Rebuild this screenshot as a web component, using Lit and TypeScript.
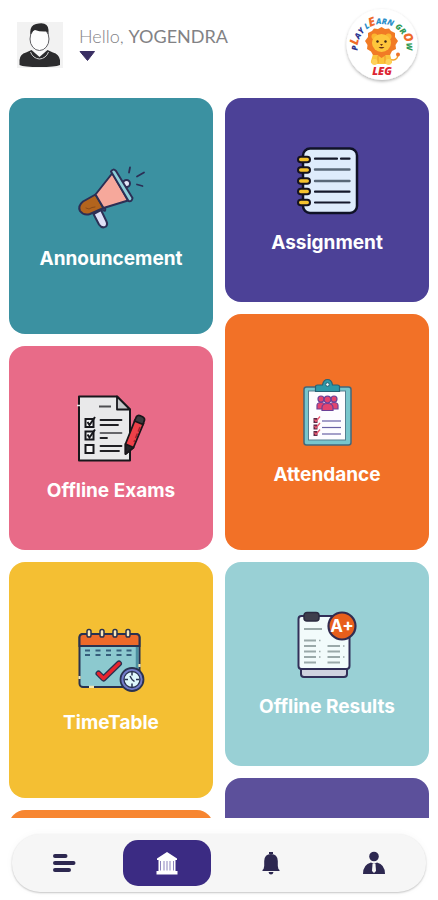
import { LitElement, html, svg, css, nothing } from "lit";
import { customElement, property } from "lit/decorators.js";
import { classMap } from "lit/directives/class-map.js";

type Card = { label?: string; tone: string; tall: boolean; icon?: unknown };

const announcement = svg`
  <g stroke="#2c2f55" stroke-width="2" stroke-linejoin="round" stroke-linecap="round">
    <path d="M18.500 53 L24 63.500 Q27 68 31 65.500 Q33 63.500 31.500 60.500 L26 49Z" fill="#dfe0f6"/>
    <path d="M28 49 Q31 51.500 30 46.500" fill="none"/>
    <path d="M20.500 33.500 L8 40.500 Q2.500 45 5 50 Q9 55 15 53 L28.500 47Z" fill="#b3641d"/>
    <path d="M11 47 L14 48 L17 46.500 L20 46" fill="none" stroke="#8a4a18" stroke-width="1"/>
    <path d="M20.500 33.500 L37.500 12 L53 39.500 L28.500 47Z" fill="#f6a89b"/>
    <circle cx="51.500" cy="22.500" r="3.500" fill="#e4e6f7"/>
    <path d="M36 10.500 Q38 7 41 10 L57.500 37 Q57 41 53.500 40Z" fill="#8ed0da"/>
    <path d="M55 6.500 L54 11.500 M62 15.500 L69 11.500 M62 23.500 L67.500 25" fill="none" stroke-width="1.800"/>
  </g>`;

const assignment = svg`
  <rect x="12" y="3.500" width="54" height="64.500" rx="7" fill="#deecfc" stroke="#0f1226" stroke-width="2.500"/>
  <path d="M24 13.700H46 M50 13.700H58.500 M24 46.700H58.500 M24 57.500H58.500" stroke="#14182b" stroke-width="2.200" stroke-linecap="round"/>
  <path d="M24 24.500H58.500 M24 36H58.500" stroke="#596878" stroke-width="2.400" stroke-linecap="round"/>
  ${[14.5, 25, 36, 46.5, 57.5].map(
    (y) => svg`<rect x="7" y=${y - 2.8} width="12" height="5.600" rx="2.800" fill="#f5c32f" stroke="#15131f" stroke-width="2"/>`
  )}`;

const exams = svg`
  <path d="M4 3.500H42L55 16.500V67.500H4Z" fill="#e9e9ea" stroke="#17171b" stroke-width="2" stroke-linejoin="round"/>
  <path d="M42 3.500L55 16.500H42Z" fill="#c5c7c9" stroke="#17171b" stroke-width="1.800" stroke-linejoin="round"/>
  <path d="M2 12.500H6" stroke="#e9e9ea" stroke-width="1.500"/>
  <path d="M24 13.500H36" stroke="#4e4e52" stroke-width="2"/>
  <path d="M25.500 27H46.500 M25.500 32H43 M25.500 53H46.500 M25.500 58H44 M25.500 45H32" stroke="#202024" stroke-width="1.800" stroke-linecap="round"/>
  <path d="M25.500 40H46.500" stroke="#66666a" stroke-width="1.800" stroke-linecap="round"/>
  ${[29.5, 42, 55.5].map(
    (y) => svg`<rect x="10.500" y=${y - 3.5} width="8" height="8" fill="#f6f6f6" stroke="#17171b" stroke-width="2"/>`
  )}
  <path d="M12.500 29L14.500 32L20 24 M12.500 41.500L14.500 44.500L20 36.500" fill="none" stroke="#17171b" stroke-width="2"/>
  <g stroke="#18161a" stroke-width="1.800" stroke-linejoin="round">
    <path d="M60 27L68.500 30.500L58.500 54.500L50.500 61V51Z" fill="#ee4048"/>
    <path d="M61.500 23.500Q63 21.500 66 23Q70 24.500 69.500 27L68 31.500L59.500 28Z" fill="#3b393d"/>
    <path d="M50.500 51L58.500 54.500L50.500 61Z" fill="#252428"/>
  </g>
  <path d="M65 34L59 49" stroke="#a31f2b" stroke-width="1.500" stroke-dasharray="5 2"/>`;

const attendance = svg`
  <rect x="13" y="10" width="47" height="58" rx="2.500" fill="#78c6cc" stroke="#42687c" stroke-width="1.500"/>
  <rect x="17.500" y="14" width="37" height="49" fill="#fdfcff" stroke="#557f90"/>
  <path d="M24.500 14.500V9.500Q24.500 8 26.500 8H31.500Q32.500 2.500 36.500 2.500Q40.500 2.500 41.500 8H46.500Q48.500 8 48.500 9.500V14.500Z" fill="#2f98a7" stroke="#286174" stroke-width="1.200"/>
  <circle cx="36.500" cy="7.500" r="1.800" fill="#f3f7f8" stroke="#286174"/>
  <g fill="#e3446f" stroke="#6c3f96" stroke-width="1.200">
    <circle cx="30" cy="22" r="3"/><circle cx="43" cy="22" r="3"/>
    <path d="M26 32V28.500Q26 25.500 30 25.500T34 28.500V32Z M39 32V28.500Q39 25.500 43 25.500T47 28.500V32Z"/>
    <circle cx="36.500" cy="22.500" r="3.300"/>
    <path d="M31 33.500V30.500Q31 26.500 36.500 26.500T42 30.500V33.500Z"/>
  </g>
  ${[43.5, 50, 56.5].map(
    (y) => svg`
      <rect x="22.500" y=${y - 2.5} width="4" height="5" fill="#5c2745"/>
      <path d=${`M23.500 ${y - 1}L25 ${y + 1}L29 ${y - 4}`} fill="none" stroke="#eb5a72" stroke-width="1.300"/>
      <path d=${`M31 ${y + 0.5}H50`} stroke="#6a62a5" stroke-width="1.200"/>`
  )}`;

const timetable = svg`
  <rect x="4.500" y="9" width="60" height="53" rx="3.500" fill="#8cc9cf" stroke="#293250" stroke-width="2"/>
  <path d="M62 21V60" stroke="#4c8fa0" stroke-width="2.500"/>
  <path d="M4.500 21V12.500Q4.500 9 8 9H61Q64.500 9 64.500 12.500V21Z" fill="#ed6a2a" stroke="#293250" stroke-width="2"/>
  <path d="M14 61.900H19 M4.500 51V54 M64.500 39V42" stroke="#f2e7b2" stroke-width="2.200"/>
  ${[14, 27, 40, 53].map(
    (x) => svg`<rect x=${x - 2} y="4.500" width="4" height="7.500" rx="1.800" fill="#fae8bc" stroke="#293250" stroke-width="1.500"/>`
  )}
  ${[12.5, 23, 33.5, 44, 54].map(
    (x) => svg`<path d=${`M${x - 2.5} 25.500H${x + 2.5} M${x - 2.5} 30H${x + 2.5}`} stroke="#365e7c" stroke-width="2.200"/>`
  )}
  <path d="M23.500 48.500L28.500 53.500L44 38.500" fill="none" stroke="#293250" stroke-width="6" stroke-linecap="round" stroke-linejoin="round"/>
  <path d="M23.500 48.500L28.500 53.500L44 38.500" fill="none" stroke="#e8242e" stroke-width="3.500" stroke-linecap="round" stroke-linejoin="round"/>
  <circle cx="57" cy="54.500" r="11.500" fill="#727bca" stroke="#293250" stroke-width="1.800"/>
  <circle cx="57" cy="54.500" r="8" fill="#dff7fb" stroke="#293250" stroke-width="1.300"/>
  <path d="M57 47V50.500 M57 58.500V62 M49.500 54.500H53 M61 54.500H64.500 M57 54.500L59.500 56.500 M57 54.500L55 51" stroke="#293250" stroke-width="1.500"/>`;

const results = svg`
  <rect x="10" y="52" width="46" height="16" rx="3" fill="#cfd2df" stroke="#312f58" stroke-width="2"/>
  <rect x="7.500" y="7" width="51" height="53" rx="3" fill="#f2fbfb" stroke="#312f58" stroke-width="2"/>
  <rect x="13" y="3.500" width="15" height="8.500" rx="3" fill="#3e3e4c" stroke="#2b2b40" stroke-width="1.500"/>
  <path d="M13 20H31 M13 31.500H25 M13 37H25 M13 42.500H25 M13 48H25 M13 53.500H25 M36.500 37H49 M36.500 42.500H49 M36.500 48H49 M36.500 53.500H49" stroke="#9aa9a9" stroke-width="1.800"/>
  <path d="M28 31.500H29.500 M28 42.500H29.500 M28 48H29.500 M52 37H53.500 M52 48H53.500" stroke="#9aa9a9" stroke-width="1.500"/>
  <circle cx="51" cy="17" r="13.500" fill="#e85f1c" stroke="#322c50" stroke-width="2.200"/>
  <text class="grade" x="51" y="23" text-anchor="middle">A+</text>`;

const columns: Card[][] = [
  [
    { label: "Announcement", tone: "teal", tall: true, icon: announcement },
    { label: "Offline Exams", tone: "pink", tall: false, icon: exams },
    { label: "TimeTable", tone: "yellow", tall: true, icon: timetable },
    { tone: "amber", tall: false },
  ],
  [
    { label: "Assignment", tone: "indigo", tall: false, icon: assignment },
    { label: "Attendance", tone: "orange", tall: true, icon: attendance },
    { label: "Offline Results", tone: "aqua", tall: false, icon: results },
    { tone: "violet", tall: true },
  ],
];

const tabs = [
  {
    name: "Menu",
    icon: svg`<path d="M3 5H13.500 M3 12H21.500 M3 19H17" stroke="currentColor" stroke-width="4" stroke-linecap="round"/>`,
  },
  {
    name: "Home",
    icon: svg`<path d="M12 1L22 7.500V9H2V7.500Z M3.500 9H20.500V20H3.500Z M1.500 20H22.500V23.500H1.500Z" fill="currentColor"/>
      <path d="M5.500 10V19.500 M9 10V19.500 M12 10V19.500 M15 10V19.500 M18.500 10V19.500" stroke="#8d84bd" stroke-width="1"/>`,
  },
  {
    name: "Notifications",
    icon: svg`<path d="M10 1H14V3H10Z M12 3Q18.500 3 18.800 10V15Q19 18 20.500 19V20H3.500V19Q5 18 5.200 15V10Q5.500 3 12 3Z M9.500 21H14.500Q14 23.500 12 23.500T9.500 21Z" fill="currentColor"/>`,
  },
  {
    name: "Profile",
    icon: svg`<circle cx="12" cy="5.500" r="4.800" fill="currentColor"/>
      <path d="M1 23Q1 13.500 9 11.500L12 13L15 11.500Q23 13.500 23 23Z" fill="currentColor"/>
      <path d="M10.500 13H13.500L14 20L12 22L10 20Z" fill="#f6f6f6"/>`,
  },
];

@customElement("school-card")
class SchoolCard extends LitElement {
  @property({ attribute: false }) card!: Card;

  static styles = css`
    :host { display: block; }
    .card {
      display: flex;
      flex-direction: column;
      align-items: center;
      justify-content: center;
      gap: 12px;
      box-sizing: border-box;
      width: 100%;
      height: 204px;
      padding: 2px 0 0;
      border: 0;
      border-radius: 16px;
      color: #fff;
      font: 700 19px/28px Inter, "Open Sans", sans-serif;
      white-space: nowrap;
      cursor: pointer;
    }
    .tall { height: 236px; }
    .icon { width: 72px; height: 72px; overflow: visible; }
    .grade { font: 700 17px Inter, sans-serif; fill: #fff; }
    .teal { background: #3b91a1; }
    .pink { background: #e86b88; }
    .yellow { background: #f4bf33; }
    .amber { background: #f78631; }
    .indigo { background: #4c4197; }
    .orange { background: #f27127; }
    .aqua { background: #99d0d5; }
    .violet { background: #5c509b; }
  `;

  render() {
    const { label, tone, tall, icon } = this.card;
    return html`<button type="button" class=${classMap({ card: true, tall, [tone]: true })}>
      ${icon ? html`<svg class="icon" viewBox="0 0 72 72" fill="none" aria-hidden="true">${icon}</svg>` : nothing}
      ${label ? html`<span>${label}</span>` : nothing}
    </button>`;
  }
}

@customElement("app-root")
class AppRoot extends LitElement {
  static styles = css`
    :host {
      display: flex;
      flex-direction: column;
      height: 100vh;
      background: #fff;
      font-family: Lato, "Open Sans", sans-serif;
    }
    .header {
      display: flex;
      align-items: flex-start;
      gap: 16px;
      box-sizing: border-box;
      height: 98px;
      flex: none;
      padding: 7px 18px 0 17px;
    }
    .avatar { width: 46px; height: 46px; margin-top: 15px; flex: none; }
    .account {
      display: flex;
      flex-direction: column;
      align-items: flex-start;
      gap: 2px;
      margin: 17px auto 0 0;
      padding: 0;
      border: 0;
      background: none;
      color: #828285;
      font: 400 18px/24px Lato, "Open Sans", sans-serif;
      cursor: pointer;
    }
    .hello { font-weight: 300; }
    .caret { width: 16px; height: 12px; }
    .logo { width: 76px; height: 78px; flex: none; }
    .arc, .brand { font-family: "Open Sans", sans-serif; font-weight: 800; font-style: italic; }
    .arc { font-size: 8px; }
    .big { font-size: 12px; }
    .brand { font-size: 11px; fill: #dd2632; }
    .navy { fill: #2b3490; }
    .red { fill: #ef6a2c; }
    .blue { fill: #2c8fc9; }
    .green { fill: #2f9a55; }
    .grid {
      display: grid;
      grid-template-columns: 1fr 1fr;
      gap: 12px;
      flex: 1;
      min-height: 0;
      padding: 0 9px;
      overflow-y: auto;
      scrollbar-width: none;
    }
    .column { display: flex; flex-direction: column; gap: 12px; }
    .nav {
      display: grid;
      grid-template-columns: repeat(4, 1fr);
      align-items: center;
      justify-items: center;
      flex: none;
      height: 58px;
      margin: 16px 12px 8px;
      border-radius: 28px;
      background: #f6f6f6;
      box-shadow: 0 1px 2px #00000038, 0 0 8px #00000008;
    }
    .tab {
      display: grid;
      place-items: center;
      width: 88px;
      height: 46px;
      padding: 0;
      border: 0;
      border-radius: 15px;
      background: none;
      color: #2d2850;
      cursor: pointer;
    }
    .active { background: #3b2b83; color: #fff; }
    .glyph { width: 24px; height: 24px; }
  `;

  render() {
    return html`
      <header class="header">
        <svg class="avatar" viewBox="0 0 46 46" aria-hidden="true">
          <rect width="46" height="46" fill="#f2f2f2"/>
          <path d="M17 25V30L22.500 34L28 30V25Z" fill="#fafafa"/>
          <path d="M2.500 43V38Q3 32 9 30.500L14.500 28L22.500 35L30.500 28L36 30.500Q42 32 43 38V43Q38 45 22.500 45T2.500 43Z" fill="#2c2c2e"/>
          <path d="M13.500 30Q16 36.500 22.500 37Q29 36.500 31.500 30" fill="none" stroke="#d0d0d0"/>
          <ellipse cx="22.500" cy="17" rx="9.500" ry="11.500" fill="#fdfdfd" stroke="#606064"/>
          <path d="M13.500 13Q12 4 19 2Q31 -1 31.500 8V13L30 9.500Q23 10 18 8Q15.500 8.500 14.500 11Z" fill="#2a2a2c"/>
        </svg>
        <button type="button" class="account">
          <span><span class="hello">Hello, </span>YOGENDRA</span>
          <svg class="caret" viewBox="0 0 16 12" aria-hidden="true">
            <path d="M1 1.500H15.500L8.500 10.500Z" fill="#3a2f63" stroke="#3a2f63" stroke-linejoin="round"/>
          </svg>
        </button>
        <svg class="logo" viewBox="0 0 76 78" role="img" aria-label="Play Learn Grow LEG">
          <defs>
            <filter id="shade" x="-20%" y="-20%" width="140%" height="140%">
              <feDropShadow dx="0" dy="1.500" stdDeviation="1.500" flood-color="#000" flood-opacity="0.300"/>
            </filter>
            <path id="ring" d="M15 50A24.500 24.500 0 1 1 61 50"/>
          </defs>
          <circle cx="38" cy="37.500" r="35.500" fill="#fff" filter="url(#shade)"/>
          <path d="M45 52Q53 55 54 48" fill="none" stroke="#f3a52e" stroke-width="1.500"/>
          <circle cx="54" cy="47.500" r="2" fill="#ee7429"/>
          <path d="M29 47H46L48 55Q48 57 44 57H31Q26 57 27 54Z" fill="#fbc43c"/>
          <path d="M37.500 20L41 22L45 21.500L47 24L51 26L51 30L54 34L51.500 38L52 42L48 44L46 48L42 48L37.500 51L33.500 48L29 48L27 44.500L23 42L23.500 38L21 34L24 30L24 26L28 24L30 21.500L34 22Z" fill="#f17b25"/>
          <circle cx="30.500" cy="29.500" r="3" fill="#fbb52f"/><circle cx="44.500" cy="29.500" r="3" fill="#fbb52f"/>
          <ellipse cx="37.500" cy="36" rx="9.500" ry="9" fill="#fdc63c"/>
          <circle cx="33.500" cy="34.500" r="1.200" fill="#3b2519"/><circle cx="41.500" cy="34.500" r="1.200" fill="#3b2519"/>
          <path d="M36 37H39L37.500 39Z M34.500 40Q37.500 43 40.500 40" fill="#6d3216"/>
          <path d="M34 49V56 M41 49V56" stroke="#ed962a"/>
          <circle cx="30.500" cy="55" r="3" fill="#fdd15b"/><circle cx="44.500" cy="55" r="3" fill="#fdd15b"/>
          <text class="arc">
            <textPath href="#ring" startOffset="50%" text-anchor="middle"><tspan class="navy">P</tspan><tspan class="red big">L</tspan><tspan class="navy">AY </tspan><tspan class="blue">L</tspan><tspan class="red big">E</tspan><tspan class="blue">ARN </tspan><tspan class="green">GR</tspan><tspan class="red big">O</tspan><tspan class="green">W</tspan></textPath>
          </text>
          <text class="brand" x="38" y="68" text-anchor="middle">LEG</text>
        </svg>
      </header>
      <main class="grid">
        ${columns.map(
          (cards) => html`<div class="column">
            ${cards.map((card) => html`<school-card .card=${card}></school-card>`)}
          </div>`
        )}
      </main>
      <nav class="nav">
        ${tabs.map(
          (tab, i) => html`<button type="button" aria-label=${tab.name} class=${classMap({ tab: true, active: i === 1 })}>
            <svg class="glyph" viewBox="0 0 24 24" fill="none" aria-hidden="true">${tab.icon}</svg>
          </button>`
        )}
      </nav>
    `;
  }
}
